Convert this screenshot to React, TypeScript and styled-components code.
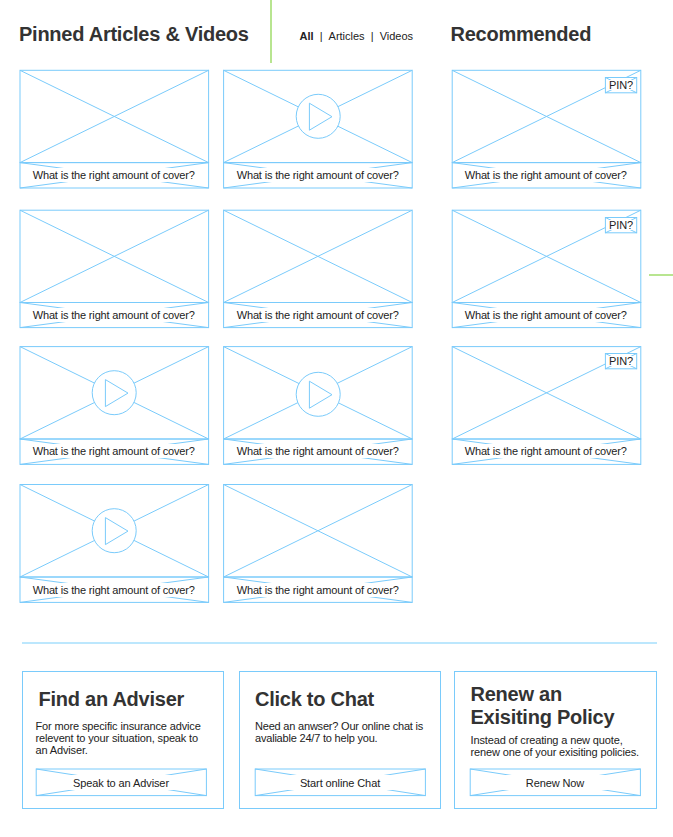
import React from "react";
import styled, { createGlobalStyle } from "styled-components";

const LINE = "#7acbfb";
const PALE = "#bce7fd";
const GREEN = "#b8e590";

const GlobalStyle = createGlobalStyle`
  body {
    margin: 0;
    background: #fff;
    color: #222;
    font-family: "Liberation Sans", Arial, Helvetica, sans-serif;
    font-size: 11px;
    line-height: 12px;
  }
  * { box-sizing: border-box; }
`;

const Page = styled.div`
  position: relative;
  width: 673px;
  height: 837px;
  overflow: hidden;
`;

const Header = styled.header`
  display: grid;
  grid-template-columns: 251px 180.5px 1fr;
  height: 70px;
  padding-left: 19px;
`;

const Heading = styled.h2`
  margin: 0;
  font-size: 20px;
  line-height: 23px;
  font-weight: bold;
  color: #333;
  white-space: nowrap;
  letter-spacing: -0.25px;
`;

const HeaderTitle = styled(Heading)`
  padding-top: 23px;
`;

const Filters = styled.nav`
  display: flex;
  align-items: flex-start;
  height: 63px;
  padding: 30px 0 0 27.5px;
  border-left: 2px solid ${GREEN};
  white-space: pre;
`;

const Filter = styled.span<{ $active?: boolean }>`
  font-weight: ${(p) => (p.$active ? "bold" : "normal")};
`;

const Separator = styled.span`
  width: 15px;
  text-align: center;
`;

const Board = styled.main`
  display: flex;
  gap: 39px;
  height: 573px;
  padding-left: 20px;
`;

const CardGrid = styled.section<{ $columns: number }>`
  display: grid;
  grid-template-columns: repeat(${(p) => p.$columns}, 189px);
  grid-template-rows: 140px 136px 139px 118px;
  column-gap: 15px;
`;

const Card = styled.article`
  width: 189px;
  height: 118px;
`;

const Thumb = styled.div`
  position: relative;
  height: 93px;
`;

const Caption = styled.div`
  position: relative;
  height: 25px;
  padding: 5px 5.5px 0 4px;
`;

const MaskedLabel = styled.span<{ $height: number; $line: number; $spacing?: number }>`
  position: relative;
  display: block;
  height: ${(p) => p.$height}px;
  line-height: ${(p) => p.$line}px;
  background: #fff;
  text-align: center;
  white-space: nowrap;
  letter-spacing: ${(p) => p.$spacing ?? -0.16}px;
`;

const Drawing = styled.svg`
  position: absolute;
  top: 0;
  left: 0;
  width: 100%;
  height: 100%;
  overflow: visible;
  fill: none;
  stroke: ${LINE};
  stroke-width: 1;
`;

const PinBox = styled.button`
  position: absolute;
  top: 7px;
  right: 4px;
  width: 32px;
  height: 16px;
  padding: 3px 4px;
  border: 0;
  background: #fff;
  color: inherit;
  font: inherit;
`;

const Divider = styled.hr`
  width: 635px;
  height: 2px;
  margin: -1px 0 0 22px;
  border: 0;
  background: ${PALE};
`;

const Actions = styled.section`
  display: grid;
  grid-template-columns: 202px 15px 202px 13px 203px;
  padding: 27px 0 0 22px;
`;

const ActionCard = styled.article<{ $column: number; $left: number; $top: number }>`
  display: flex;
  flex-direction: column;
  grid-column: ${(p) => p.$column};
  height: 138px;
  padding: ${(p) => p.$top}px 0 12px ${(p) => p.$left}px;
  border: 1px solid ${LINE};
`;

const ActionTitle = styled(Heading)<{ $indent: number }>`
  margin-left: ${(p) => p.$indent}px;
`;

const Copy = styled.p<{ $gap: number; $spacing: number; $indent?: number }>`
  margin: ${(p) => p.$gap}px 0 0 ${(p) => p.$indent ?? 0}px;
  white-space: pre;
  letter-spacing: ${(p) => p.$spacing}px;
`;

const ActionButton = styled.button`
  position: relative;
  width: 171px;
  height: 27px;
  margin-top: auto;
  padding: 6px 5px 6px 4px;
  border: 0;
  background: #fff;
  color: inherit;
  font: inherit;
`;

const SideMark = styled.div`
  position: absolute;
  top: 274px;
  right: 0;
  width: 24px;
  height: 2px;
  background: ${GREEN};
`;

type Box = { x?: number; y?: number; w: number; h: number };

function CrossedBox({ x = 0, y = 0, w, h, children }: Box & { children?: React.ReactNode }) {
  return (
    <Drawing aria-hidden="true">
      <rect x={x} y={y} width={w} height={h} />
      <path d={`M${x} ${y}l${w} ${h}M${x} ${y + h}l${w} ${-h}`} />
      {children}
    </Drawing>
  );
}

function PlayMark({ cy }: { cy: number }) {
  return (
    <>
      <circle cx="94.2" cy={cy} r="22" fill="#fff" />
      <path d={`M85.4 ${cy - 13.1}v27l22.6-13.5z`} />
    </>
  );
}

/* Vertical positions of the frame lines inside each row of cards. */
const ROWS = [
  { top: 0.3, mid: 92.6, bottom: 118 },
  { top: 0.2, mid: 92.5, bottom: 117.6 },
  { top: 0.6, mid: 93, bottom: 118.4 },
  { top: -0.5, mid: 92, bottom: 117.4 },
];

type CardProps = { row: number; x: number; play?: number; pin?: boolean };

function ArticleCard({ row, x, play, pin }: CardProps) {
  const { top, mid, bottom } = ROWS[row];
  return (
    <Card>
      <Thumb>
        <CrossedBox x={x} y={top} w={188.6} h={mid - top}>
          {play && <PlayMark cy={play} />}
        </CrossedBox>
        {pin && (
          <PinBox>
            <CrossedBox x={0.4} y={0.5} w={31.3} h={15.3} />
            <MaskedLabel $height={10} $line={10}>PIN?</MaskedLabel>
          </PinBox>
        )}
      </Thumb>
      <Caption>
        <CrossedBox x={x} y={mid - 93} w={188.6} h={bottom - mid} />
        <MaskedLabel $height={14} $line={14}>What is the right amount of cover?</MaskedLabel>
      </Caption>
    </Card>
  );
}

function Action({ label }: { label: string }) {
  return (
    <ActionButton>
      <CrossedBox x={0.2} y={0} w={170.2} h={26.6} />
      <MaskedLabel $height={15} $line={17} $spacing={-0.1}>{label}</MaskedLabel>
    </ActionButton>
  );
}

export default function App() {
  return (
    <Page>
      <GlobalStyle />
      <Header>
        <HeaderTitle>Pinned Articles &amp; Videos</HeaderTitle>
        <Filters>
          <Filter $active>All</Filter>
          <Separator>|</Separator>
          <Filter>Articles</Filter>
          <Separator>|</Separator>
          <Filter>Videos</Filter>
        </Filters>
        <HeaderTitle>Recommended</HeaderTitle>
      </Header>
      <Board>
        <CardGrid $columns={2}>
          <ArticleCard row={0} x={0} />
          <ArticleCard row={0} x={-0.4} play={46.3} />
          <ArticleCard row={1} x={0} />
          <ArticleCard row={1} x={-0.4} />
          <ArticleCard row={2} x={0} play={46.7} />
          <ArticleCard row={2} x={-0.4} play={48.3} />
          <ArticleCard row={3} x={0} play={45.7} />
          <ArticleCard row={3} x={-0.4} />
        </CardGrid>
        <CardGrid $columns={1}>
          <ArticleCard row={0} x={0.2} pin />
          <ArticleCard row={1} x={0.2} pin />
          <ArticleCard row={2} x={0.2} pin />
        </CardGrid>
      </Board>
      <Divider />
      <Actions>
        <ActionCard $column={1} $left={13} $top={16}>
          <ActionTitle $indent={2.5}>Find an Adviser</ActionTitle>
          <Copy $gap={9} $spacing={-0.14} $indent={-0.5}>{"For more specific insurance advice\nrelevent to your situation, speak to\nan Adviser."}</Copy>
          <Action label="Speak to an Adviser" />
        </ActionCard>
        <ActionCard $column={3} $left={15} $top={16}>
          <ActionTitle $indent={0}>Click to Chat</ActionTitle>
          <Copy $gap={9} $spacing={-0.2}>{"Need an anwser? Our online chat is\navaliable 24/7 to help you."}</Copy>
          <Action label="Start online Chat" />
        </ActionCard>
        <ActionCard $column={5} $left={15} $top={11}>
          <ActionTitle $indent={0.5}>
            Renew an
            <br />
            Exisiting Policy
          </ActionTitle>
          <Copy $gap={5} $spacing={-0.14} $indent={0.5}>{"Instead of creating a new quote,\nrenew one of your exisiting policies."}</Copy>
          <Action label="Renew Now" />
        </ActionCard>
      </Actions>
      <SideMark />
    </Page>
  );
}
